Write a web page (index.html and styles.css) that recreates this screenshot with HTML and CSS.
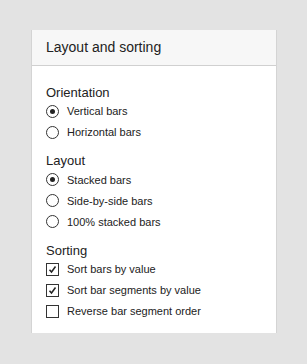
FILE: index.html
```html
<!DOCTYPE html>
<html lang="en">
<head>
  <meta charset="UTF-8">
  <title>Layout and sorting</title>
  <link rel="stylesheet" href="styles.css">
</head>
<body>
  <div class="panel">
    <div class="panel-header">Layout and sorting</div>
    <div class="panel-body">
      <div class="group">
        <div class="group-title">Orientation</div>
        <label class="option"><span class="radio checked"></span>Vertical bars</label>
        <label class="option"><span class="radio"></span>Horizontal bars</label>
      </div>
      <div class="group">
        <div class="group-title">Layout</div>
        <label class="option"><span class="radio checked"></span>Stacked bars</label>
        <label class="option"><span class="radio"></span>Side-by-side bars</label>
        <label class="option"><span class="radio"></span>100% stacked bars</label>
      </div>
      <div class="group">
        <div class="group-title">Sorting</div>
        <label class="option">
          <span class="check"><svg width="11" height="11" viewBox="0 0 11 11"><polyline points="2.5,5.8 4.5,8 8.5,2.5" fill="none" stroke="#222" stroke-width="1.5"/></svg></span>Sort bars by value
        </label>
        <label class="option">
          <span class="check"><svg width="11" height="11" viewBox="0 0 11 11"><polyline points="2.5,5.8 4.5,8 8.5,2.5" fill="none" stroke="#222" stroke-width="1.5"/></svg></span>Sort bar segments by value
        </label>
        <label class="option"><span class="check"></span>Reverse bar segment order</label>
      </div>
    </div>
  </div>
</body>
</html>
```

FILE: styles.css
```css
body {
  margin: 0;
  background: #e3e3e3;
  font-family: "Liberation Sans", Arial, sans-serif;
  color: #222;
}

.panel {
  margin: 30px 0 0 31px;
  width: 244px;
  height: 303px;
  background: white;
  border-left: 1px solid #d4d4d4;
  border-right: 1px solid #d4d4d4;
}

.panel-header {
  height: 35px;
  line-height: 35px;
  padding-left: 14px;
  background: #f7f7f7;
  border-bottom: 1px solid #d0d0d0;
  font-size: 14px;
}

.panel-body {
  padding: 17.5px 14px 0;
}

.group {
  margin-bottom: 9.5px;
}

.group-title {
  font-size: 13px;
  line-height: 17px;
}

.option {
  display: flex;
  align-items: center;
  height: 21px;
  font-size: 11px;
}

.radio {
  width: 11px;
  height: 11px;
  border: 1px solid #333;
  border-radius: 50%;
  margin-right: 8px;
  display: flex;
  align-items: center;
  justify-content: center;
}

.radio.checked::after {
  content: "";
  width: 5px;
  height: 5px;
  border-radius: 50%;
  background: #222;
}

.check {
  width: 11px;
  height: 11px;
  border: 1px solid #333;
  margin-right: 8px;
  display: flex;
}
```
